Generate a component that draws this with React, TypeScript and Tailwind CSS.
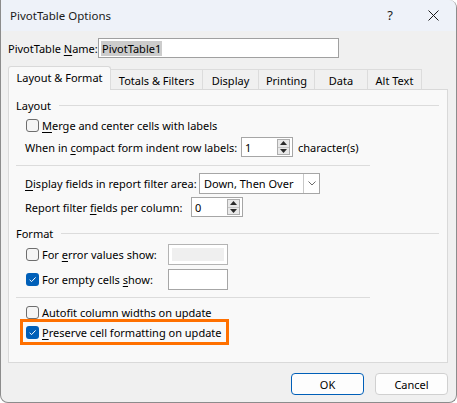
import React from "react";

const Check = ({ checked }: { checked?: boolean }) =>
  checked ? (
    <span className="flex h-[13px] w-[13px] shrink-0 items-center justify-center rounded-[3px] bg-[#005fb8]">
      <svg width="9" height="9" viewBox="0 0 9 9">
        <path d="M1.6 4.8 L3.6 6.6 L7.6 2.4" stroke="#ffffff" strokeWidth="1" fill="none" />
      </svg>
    </span>
  ) : (
    <span className="h-[13px] w-[13px] shrink-0 rounded-[3px] border border-[#6e6e6e] bg-[#f5f5f5]" />
  );

const Spin = () => (
  <span className="flex h-[16px] w-[13px] flex-col border border-[#adadad] bg-[#e9e9e9]">
    <span className="flex flex-1 items-center justify-center border-b border-[#c4c4c4]">
      <svg width="7" height="4" viewBox="0 0 7 4">
        <path d="M0 4 L3.5 0 L7 4Z" fill="#2b2b2b" />
      </svg>
    </span>
    <span className="flex flex-1 items-center justify-center">
      <svg width="7" height="4" viewBox="0 0 7 4">
        <path d="M0 0 L3.5 4 L7 0Z" fill="#2b2b2b" />
      </svg>
    </span>
  </span>
);

const SpinInput = ({ value }: { value: string }) => (
  <div className="flex h-[20px] w-[52px] items-center border border-[#a6a6a6] bg-white pl-[3px] pr-[2px]">
    <span className="flex-1">{value}</span>
    <Spin />
  </div>
);

const Sep = ({ long }: { long?: boolean }) => (
  <span className={long ? "ml-[8px] mr-[8px] h-px flex-1 bg-[#dcdcdc]" : "ml-[7px] h-px w-[354px] bg-[#dcdcdc]"} />
);

const Key = ({ children }: { children: React.ReactNode }) => (
  <span className="underline decoration-[1px] underline-offset-[2px]">{children}</span>
);

const tabs = [
  { label: "Layout & Format", w: "w-[103px]", active: true },
  { label: "Totals & Filters", w: "w-[93px]" },
  { label: "Display", w: "w-[57px]" },
  { label: "Printing", w: "w-[57px]" },
  { label: "Data", w: "w-[54px]" },
  { label: "Alt Text", w: "w-[55px]" },
];

export default function App() {
  return (
    <div className="h-[403px] w-[457px] overflow-hidden rounded-tr-[8px] rounded-b-[8px] border-x border-b border-[#8c8c8c] bg-[#f0f0f0] font-['Noto_Sans',sans-serif] text-[11px] leading-none text-black">
      {/* title bar */}
      <div className="flex h-[31px] items-center bg-[#eef2f9] pl-[9px]">
        <span className="text-[11.5px] text-[#1a1a1a]">PivotTable Options</span>
        <span className="ml-auto mr-[35px] text-[13px] text-[#1a1a1a]">?</span>
        <svg width="11" height="11" viewBox="0 0 11 11" className="mr-[17px]">
          <path d="M0.5 0.5 L10.5 10.5 M10.5 0.5 L0.5 10.5" stroke="#1a1a1a" strokeWidth="1" />
        </svg>
      </div>

      <div className="px-[7px]">
        {/* name row */}
        <div className="mt-[7px] flex h-[20px] items-center">
          <span className="w-[90px] pl-[-1px]">
            PivotTable <Key>N</Key>ame:
          </span>
          <div className="flex h-[20px] w-[241px] items-center border border-[#a0a0a0] bg-white pl-[2px]">
            <span className="bg-[#cccccc] px-px py-[2px]">PivotTable1</span>
          </div>
        </div>

        {/* tabs */}
        <div className="relative z-10 mt-[8px] flex h-[23px] items-end">
          {tabs.map((t) =>
            t.active ? (
              <div
                key={t.label}
                className={`${t.w} -mb-px flex h-[24px] items-center justify-center rounded-t-[3px] border border-b-0 border-[#d9d9d9] bg-[#f9f9f9] pb-[3px]`}
              >
                {t.label}
              </div>
            ) : (
              <div
                key={t.label}
                className={`${t.w} -ml-px flex h-[20px] items-center justify-center border border-b-0 border-[#dcdcdc] bg-[#f0f0f0] pt-px first:ml-0`}
              >
                {t.label}
              </div>
            ),
          )}
        </div>

        {/* panel */}
        <div className="flex h-[274px] w-[440px] flex-col border border-[#d9d9d9] bg-[#f9f9f9]">
          <div className="mt-[6px] flex h-[18px] items-center pl-[7px]">
            <span>Layout</span>
            <Sep long />
          </div>
          <div className="flex h-[22px] items-center gap-[3px] pl-[17px]">
            <Check />
            <span>
              <Key>M</Key>erge and center cells with labels
            </span>
          </div>
          <div className="flex h-[22px] items-center pl-[16px]">
            <span className="w-[216px]">
              When in <Key>c</Key>ompact form indent row labels:
            </span>
            <SpinInput value="1" />
            <span className="ml-[5px]">character(s)</span>
          </div>
          <div className="flex h-[14px] items-center">
            <Sep />
          </div>
          <div className="flex h-[23px] items-center pl-[16px]">
            <span className="w-[174px]">
              <Key>D</Key>isplay fields in report filter area:
            </span>
            <div className="flex h-[21px] w-[121px] items-center border border-[#a6a6a6] bg-white">
              <span className="flex-1 pl-[4px]">Down, Then Over</span>
              <span className="flex h-full w-[16px] items-center justify-center border-l border-[#c8c8c8]">
                <svg width="8" height="5" viewBox="0 0 8 5">
                  <path d="M0.5 0.5 L4 4 L7.5 0.5" stroke="#6b6b6b" strokeWidth="1" fill="none" />
                </svg>
              </span>
            </div>
          </div>
          <div className="flex h-[24px] items-center pl-[16px]">
            <span className="w-[166px]">
              Report filter <Key>f</Key>ields per column:
            </span>
            <SpinInput value="0" />
          </div>

          <div className="mt-[5px] flex h-[18px] items-center pl-[7px]">
            <span>Format</span>
            <Sep long />
          </div>
          <div className="flex h-[25px] items-center pl-[17px]">
            <div className="flex w-[142px] items-center gap-[3px]">
              <Check />
              <span>
                For <Key>e</Key>rror values show:
              </span>
            </div>
            <div className="flex h-[21px] w-[60px] items-center border border-[#b4b4b4] bg-white p-[3px]">
              <span className="h-full w-full bg-[#efefef]" />
            </div>
          </div>
          <div className="flex h-[25px] items-center pl-[17px]">
            <div className="flex w-[142px] items-center gap-[3px]">
              <Check checked />
              <span>
                For empty cells <Key>s</Key>how:
              </span>
            </div>
            <div className="h-[21px] w-[60px] border border-[#a6a6a6] bg-white" />
          </div>
          <div className="flex h-[11px] items-center">
            <Sep />
          </div>
          <div className="flex h-[19px] items-center gap-[3px] pl-[17px]">
            <Check />
            <span>
              <Key>A</Key>utofit column widths on update
            </span>
          </div>
          <div className="-mt-[3px] ml-[11px] flex h-[26px] w-[209px] items-center gap-[3px] border-[3px] border-[#ff7000] pl-[3px]">
            <Check checked />
            <span>
              <Key>P</Key>reserve cell formatting on update
            </span>
          </div>
        </div>

        {/* buttons */}
        <div className="mt-[10px] flex justify-end gap-[11px] pr-[1px]">
          <button className="flex h-[22px] w-[73px] items-center justify-center rounded-[4px] border border-[#005fb8] bg-[#fdfdfd]">
            OK
          </button>
          <button className="flex h-[22px] w-[73px] items-center justify-center rounded-[4px] border border-[#d0d0d0] bg-[#fdfdfd]">
            Cancel
          </button>
        </div>
      </div>
    </div>
  );
}
